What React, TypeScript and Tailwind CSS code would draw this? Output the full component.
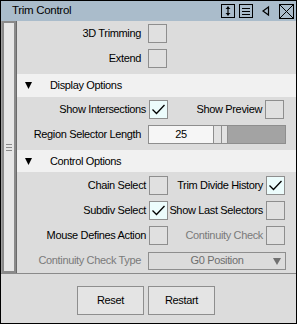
import React from "react";

// ── Small pieces ──────────────────────────────────────────────────────────────

function CheckBox({ checked = false }: { checked?: boolean }) {
  return (
    <div
      className={`w-[19px] h-[19px] shrink-0 border border-[#8e8e8e] flex items-center justify-center ${
        checked ? "bg-[#ecfcfc]" : "bg-[#e0e0e0]"
      }`}
    >
      {checked && (
        <svg width="15" height="13" viewBox="0 0 15 13">
          <path d="M1.5 6.5 L5.5 10.5 L13.5 2" fill="none" stroke="#000" strokeWidth="1.3" />
        </svg>
      )}
    </div>
  );
}

function Label({
  children,
  width,
  muted = false,
}: {
  children: React.ReactNode;
  width: number;
  muted?: boolean;
}) {
  return (
    <div
      className={`flex justify-end whitespace-nowrap pr-[2px] ${muted ? "text-[#7a7a7a]" : "text-black"}`}
      style={{ width }}
    >
      {children}
    </div>
  );
}

function SectionHeader({ title, h }: { title: string; h: string }) {
  return (
    <div className={`flex items-center bg-[#f1f1f1] ${h}`}>
      <svg width="7" height="7" viewBox="0 0 7 7" className="ml-[8px] mr-[18px]">
        <path d="M0 0 H7 L3.5 7 Z" fill="#000" />
      </svg>
      <span>{title}</span>
    </div>
  );
}

// ── Title bar icons ───────────────────────────────────────────────────────────

function TitleIcons() {
  return (
    <div className="flex items-center gap-[4px] mr-[2px]">
      <svg width="14" height="14" viewBox="0 0 14 14">
        <rect x="0.5" y="0.5" width="13" height="13" fill="none" stroke="#000" />
        <path d="M7 2.5 V11.5" stroke="#000" strokeWidth="1.2" />
        <path d="M4.5 5 L7 2.5 L9.5 5 Z M4.5 9 L7 11.5 L9.5 9 Z" fill="#000" />
      </svg>
      <svg width="14" height="14" viewBox="0 0 14 14">
        <rect x="0.5" y="0.5" width="13" height="13" fill="none" stroke="#000" />
        <path d="M3 4.5 H11 M3 7.5 H11 M3 10.5 H11" stroke="#000" />
      </svg>
      <svg width="14" height="14" viewBox="0 0 14 14" className="mx-[2px]">
        <path d="M9.5 3 L4 7 L9.5 11 Z" fill="none" stroke="#000" strokeWidth="1.2" />
      </svg>
      <svg width="15" height="15" viewBox="0 0 15 15">
        <rect x="0.5" y="0.5" width="14" height="14" fill="none" stroke="#000" />
        <path d="M1 1 L14 14 M14 1 L1 14" stroke="#000" />
      </svg>
    </div>
  );
}

// ── Page ──────────────────────────────────────────────────────────────────────

export default function App() {
  return (
    <div
      className="w-[297px] h-[324px] border border-black bg-[#dcdcdc] flex flex-col text-[11px] tracking-[-0.35px] leading-none"
      style={{ fontFamily: '"Liberation Sans", Arial, sans-serif' }}
    >
      {/* Title bar */}
      <div className="h-[20px] shrink-0 bg-[#aabccb] flex items-center justify-between pl-[11px]">
        <span className="text-[11.5px] tracking-[-0.3px]">Trim Control</span>
        <TitleIcons />
      </div>

      {/* Body */}
      <div className="flex h-[252px] shrink-0">
        <div className="w-[16px] shrink-0 flex border-r border-[#6a6a6a] bg-[#a0a0a0] pl-[1px]">
          <div className="flex-1 border-2 border-[#8a8a8a] bg-[#e6e6e6] flex items-center justify-center">
            <svg width="6" height="7" viewBox="0 0 6 7" className="mt-[1px]">
              <path d="M0 0.5 H6 M0 3.5 H6 M0 6.5 H6" stroke="#8a8a8a" />
            </svg>
          </div>
        </div>

        <div className="flex-1 flex flex-col">
          {/* Top options */}
          <div className="flex flex-col gap-[6px] pt-[3px] pb-[6px]">
            <div className="flex items-center h-[19px]">
              <Label width={126}>3D Trimming</Label>
              <div className="ml-[5px]"><CheckBox /></div>
            </div>
            <div className="flex items-center h-[19px]">
              <Label width={126}>Extend</Label>
              <div className="ml-[5px]"><CheckBox /></div>
            </div>
          </div>

          <SectionHeader title="Display Options" h="h-[23px]" />
          <div className="flex flex-col gap-[6px] pt-[3px] pb-[6px]">
            <div className="flex items-center h-[19px]">
              <Label width={131}>Show Intersections</Label>
              <div className="ml-[1px]"><CheckBox checked /></div>
              <Label width={96}>Show Preview</Label>
              <div className="ml-[1px]"><CheckBox /></div>
            </div>
            <div className="flex items-center h-[19px]">
              <Label width={126}>Region Selector Length</Label>
              <div className="ml-[5px] flex h-[19px] border border-[#8e8e8e] w-[138px]">
                <div className="w-[65px] bg-[#f6f6f6] border-r border-[#8e8e8e] flex items-center justify-center">
                  25
                </div>
                <div className="w-[8px] bg-[#e2e2e2] border-r border-[#8e8e8e]" />
                <div className="w-[6px] bg-[#e2e2e2] border-r border-[#8e8e8e]" />
                <div className="flex-1 bg-[#a3a3a3]" />
              </div>
            </div>
          </div>

          <SectionHeader title="Control Options" h="h-[22px]" />
          <div className="flex flex-col gap-[6px] pt-[4px]">
            <div className="flex items-center h-[19px]">
              <Label width={131}>Chain Select</Label>
              <div className="ml-[1px]"><CheckBox /></div>
              <Label width={97}>Trim Divide History</Label>
              <div className="ml-[1px]"><CheckBox checked /></div>
            </div>
            <div className="flex items-center h-[19px]">
              <Label width={131}>Subdiv Select</Label>
              <div className="ml-[1px]"><CheckBox checked /></div>
              <Label width={97}>Show Last Selectors</Label>
              <div className="ml-[1px]"><CheckBox /></div>
            </div>
            <div className="flex items-center h-[19px]">
              <Label width={131}>Mouse Defines Action</Label>
              <div className="ml-[1px]"><CheckBox /></div>
              <Label width={97} muted>Continuity Check</Label>
              <div className="ml-[1px]"><CheckBox /></div>
            </div>
            <div className="flex items-center h-[19px]">
              <Label width={126} muted>Continuity Check Type</Label>
              <div className="ml-[5px] w-[138px] h-[18px] border border-[#8e8e8e] flex items-center text-[#6e6e6e] relative">
                <span className="flex-1 text-center">G0 Position</span>
                <svg width="8" height="7" viewBox="0 0 8 7" className="absolute right-[4px] top-[5px]">
                  <path d="M0 0 H8 L4 7 Z" fill="#707070" />
                </svg>
              </div>
            </div>
          </div>
        </div>
      </div>

      {/* Bottom buttons */}
      <div className="flex-1 border-t border-[#8a8a8a] flex justify-center gap-[4px] pt-[12px] pr-[5px]">
        <button className="w-[67px] h-[29px] border border-[#8e8e8e] bg-[#e4e4e4]">Reset</button>
        <button className="w-[67px] h-[29px] border border-[#8e8e8e] bg-[#e4e4e4]">Restart</button>
      </div>
    </div>
  );
}
